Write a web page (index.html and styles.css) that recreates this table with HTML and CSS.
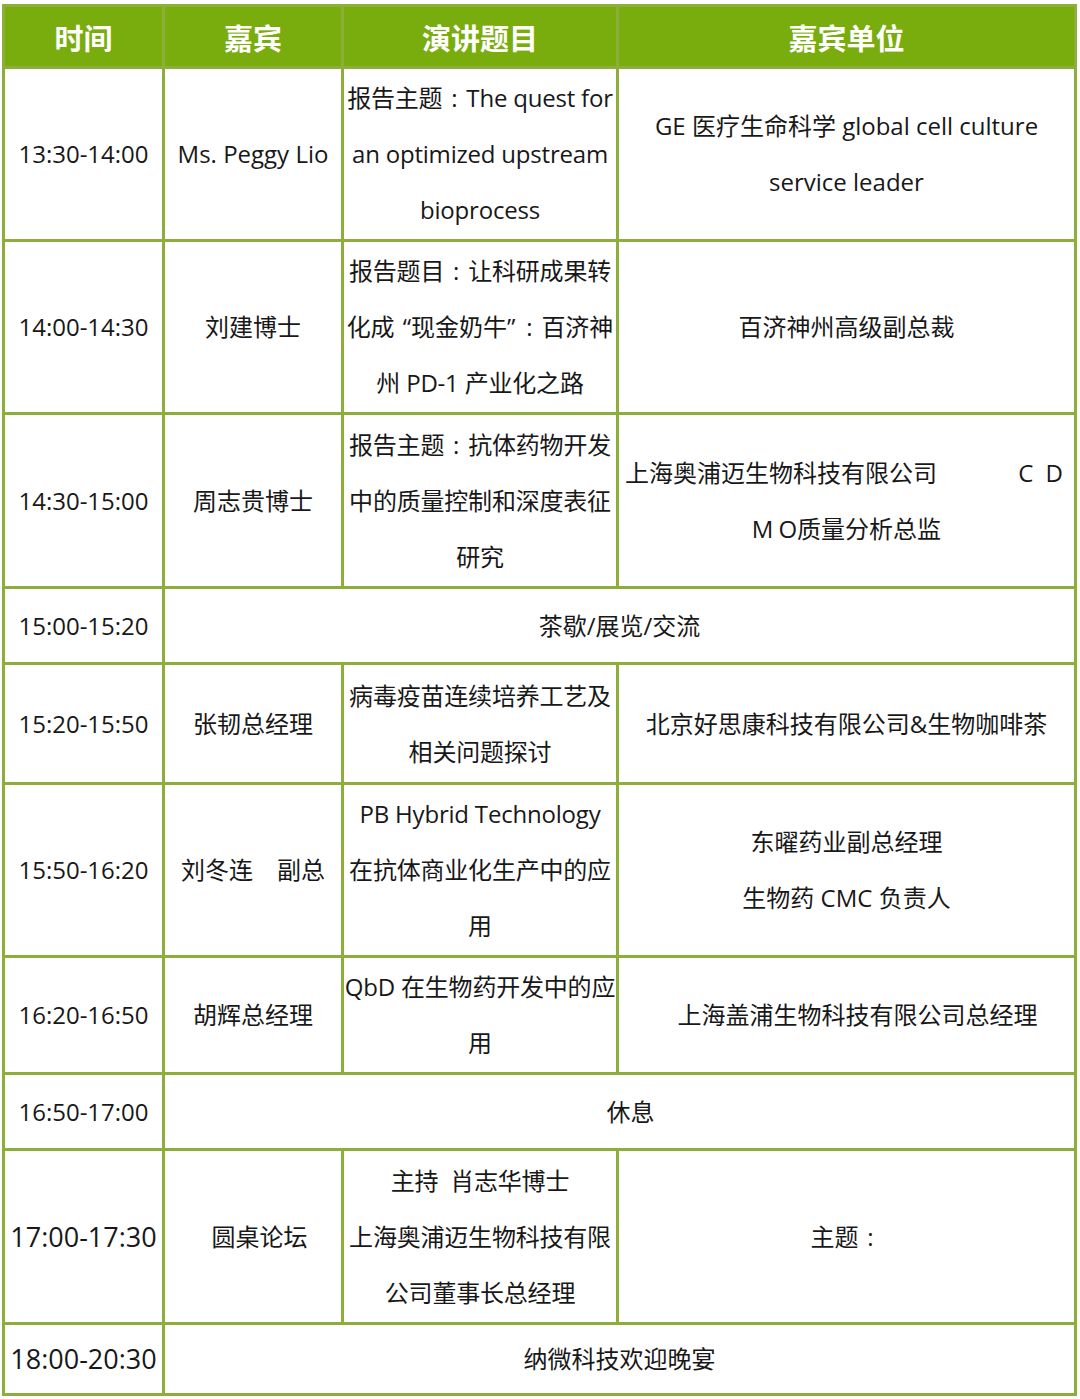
FILE: index.html
```html
<!DOCTYPE html>
<html lang="zh-CN">
<head>
<meta charset="utf-8">
<title>日程</title>
<link rel="stylesheet" href="styles.css">
</head>
<body>
<table class="agenda">
  <colgroup>
    <col class="c1"><col class="c2"><col class="c3"><col class="c4">
  </colgroup>
  <thead>
    <tr class="h-head">
      <th>时间</th><th>嘉宾</th><th>演讲题目</th><th>嘉宾单位</th>
    </tr>
  </thead>
  <tbody>
    <tr class="h3l">
      <td>13:30-14:00</td>
      <td class="nowrap">Ms. Peggy Lio</td>
      <td class="tight">报告主题<span class="colon">:</span>The quest for<br>an optimized upstream<br>bioprocess</td>
      <td>GE 医疗生命科学 global cell culture<br>service leader</td>
    </tr>
    <tr class="h3l">
      <td>14:00-14:30</td>
      <td>刘建博士</td>
      <td class="tight">报告题目<span class="colon">:</span>让科研成果转<br><span class="loose">化成<span class="q-open">“</span>现金奶牛<span class="q-close">”</span><span class="colon">:</span>百济神</span><br>州 PD-1 产业化之路</td>
      <td>百济神州高级副总裁</td>
    </tr>
    <tr class="h3x">
      <td>14:30-15:00</td>
      <td>周志贵博士</td>
      <td class="tight">报告主题<span class="colon">:</span>抗体药物开发<br>中的质量控制和深度表征<br>研究</td>
      <td><div class="split"><span>上海奥浦迈生物科技有限公司</span><span class="cd">C D</span></div><div><span class="m">M</span>O质量分析总监</div></td>
    </tr>
    <tr class="h1l">
      <td>15:00-15:20</td>
      <td colspan="3">茶歇/展览/交流</td>
    </tr>
    <tr class="h2l">
      <td>15:20-15:50</td>
      <td>张韧总经理</td>
      <td class="tight">病毒疫苗连续培养工艺及<br>相关问题探讨</td>
      <td>北京好思康科技有限公司&amp;生物咖啡茶</td>
    </tr>
    <tr class="h3l">
      <td>15:50-16:20</td>
      <td class="nowrap">刘冬连　副总</td>
      <td class="tight">PB Hybrid Technology<br>在抗体商业化生产中的应<br>用</td>
      <td>东曜药业副总经理<br>生物药 CMC 负责人</td>
    </tr>
    <tr class="h2s">
      <td>16:20-16:50</td>
      <td>胡辉总经理</td>
      <td class="tight">QbD 在生物药开发中的应<br>用</td>
      <td class="shift">上海盖浦生物科技有限公司总经理</td>
    </tr>
    <tr class="h1l">
      <td>16:50-17:00</td>
      <td colspan="3" class="shift">休息</td>
    </tr>
    <tr class="h3x">
      <td class="big">17:00-17:30</td>
      <td class="shift-sm">圆桌论坛</td>
      <td class="tight">主持&ensp;肖志华博士<br>上海奥浦迈生物科技有限<br>公司董事长总经理</td>
      <td>主题<span class="colon">:</span></td>
    </tr>
    <tr class="h-last">
      <td class="big">18:00-20:30</td>
      <td colspan="3">纳微科技欢迎晚宴</td>
    </tr>
  </tbody>
</table>
</body>
</html>
```

FILE: styles.css
```css
html, body {
  margin: 0;
  padding: 0;
  background: #ffffff;
}
body {
  padding: 4px 0 0 2px;
}
.agenda {
  border-collapse: collapse;
  table-layout: fixed;
  width: 1072px;
  font-family: "Open Sans", "Noto Sans CJK SC", sans-serif;
  color: #181818;
  font-size: 24px;
  line-height: 56px;
}
.c1 { width: 160px; }
.c2 { width: 179px; }
.c3 { width: 275px; }
.c4 { width: 458px; }
.agenda th,
.agenda td {
  border: 3px solid #8eae3c;
  text-align: center;
  vertical-align: middle;
  padding: 0;
}
.agenda th {
  background: #79ad0d;
  color: #ffffff;
  font-family: "Noto Sans CJK SC", sans-serif;
  font-weight: 700;
  font-size: 29px;
  line-height: 40px;
}
.h-head { height: 62px; }
.h3l { height: 173px; }
.h3x { height: 174px; }
.h2l { height: 120px; }
.h2s { height: 117px; }
.h1l { height: 76px; }
.h-last { height: 71px; }
.nowrap { white-space: nowrap; }
.tight {
  letter-spacing: -0.2px;
  white-space: nowrap;
}
.loose { letter-spacing: 0; }
.colon {
  display: inline-block;
  width: 1em;
  text-align: center;
  letter-spacing: 0;
}
.q-open { padding-left: 8px; }
.q-close { padding-right: 2px; }
.agenda .big { font-size: 27px; }
.split {
  display: flex;
  justify-content: space-between;
  padding: 0 8px 0 6px;
}
.cd { letter-spacing: 3px; }
.m { letter-spacing: 5px; }
.agenda .shift { padding-left: 22px; }
.agenda .shift-sm { padding-left: 13px; }
```
